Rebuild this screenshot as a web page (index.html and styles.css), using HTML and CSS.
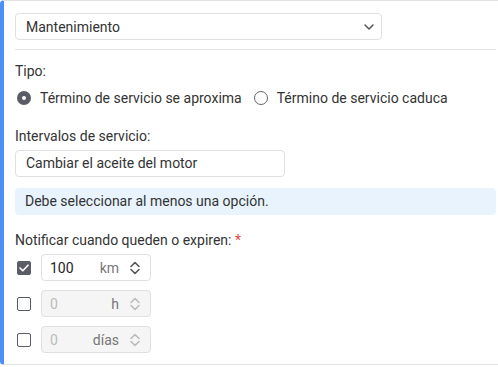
FILE: index.html
```html
<!DOCTYPE html>
<html>
<head>
  <title>Intervalo de servicio</title>
  <link rel="stylesheet" href="styles.css">
</head>
<body>

<div class="card">
  <div class="select">
    <span>Mantenimiento</span>
    <svg class="chevron" width="10" height="6" viewBox="0 0 10 6"><path d="M1 1l4 4 4-4" fill="none" stroke="#555" stroke-width="1.5" stroke-linecap="round" stroke-linejoin="round"/></svg>
  </div>

  <div class="divider"></div>

  <div class="label label-tipo">Tipo:</div>
  <div class="radios">
    <label class="radio checked"><span class="dot"></span>Término de servicio se aproxima</label>
    <label class="radio"><span class="dot"></span>Término de servicio caduca</label>
  </div>

  <div class="label label-interval">Intervalos de servicio:</div>
  <div class="input wide">Cambiar el aceite del motor</div>

  <div class="alert">Debe seleccionar al menos una opción.</div>

  <div class="label label-notify">Notificar cuando queden o expiren: <span class="req">*</span></div>

  <div class="rows">
    <div class="row">
      <span class="check checked">
        <svg width="10" height="8" viewBox="0 0 10 8"><path d="M1 4l2.8 2.8L9 1.2" fill="none" stroke="#fff" stroke-width="1.6" stroke-linecap="round" stroke-linejoin="round"/></svg>
      </span>
      <div class="number">
        <span class="value">100</span>
        <span class="unit">km</span>
        <svg class="spin" width="12" height="16" viewBox="0 0 12 16"><path d="M2 6.5l4-4 4 4M2 9.5l4 4 4-4" fill="none" stroke="#555" stroke-width="1.6" stroke-linecap="round" stroke-linejoin="round"/></svg>
      </div>
    </div>
    <div class="row">
      <span class="check"></span>
      <div class="number disabled">
        <span class="value">0</span>
        <span class="unit">h</span>
        <svg class="spin" width="12" height="16" viewBox="0 0 12 16"><path d="M2 6.5l4-4 4 4M2 9.5l4 4 4-4" fill="none" stroke="#bbb" stroke-width="1.6" stroke-linecap="round" stroke-linejoin="round"/></svg>
      </div>
    </div>
    <div class="row">
      <span class="check"></span>
      <div class="number disabled">
        <span class="value">0</span>
        <span class="unit">días</span>
        <svg class="spin" width="12" height="16" viewBox="0 0 12 16"><path d="M2 6.5l4-4 4 4M2 9.5l4 4 4-4" fill="none" stroke="#bbb" stroke-width="1.6" stroke-linecap="round" stroke-linejoin="round"/></svg>
      </div>
    </div>
  </div>
</div>

</body>
</html>
```

FILE: styles.css
```css
/* Service interval card */
body {
  margin: 0;
  font-family: Roboto, "Liberation Sans", sans-serif;
  font-size: 14px;
  color: #333;
  background: #fff;
}
.card {
  width: 481px;
  height: 340px;
  padding: 12px 11px 11px 11px;
  border: 1px solid #e2e2e2;
  border-left: 4px solid #4d90f5;
  border-radius: 4px;
}
.select {
  display: flex;
  align-items: center;
  justify-content: space-between;
  box-sizing: border-box;
  width: 367px;
  height: 27px;
  padding: 0 7px 0 10px;
  border: 1px solid #e0e0e0;
  border-radius: 4px;
}
.divider {
  height: 1px;
  background: #e4e4e4;
  margin-top: 9px;
}
.label {
  line-height: 20px;
}
.label-tipo {
  margin-top: 11px;
}
.radios {
  display: flex;
  margin-top: 7px;
  line-height: 20px;
}
.radio {
  display: flex;
  align-items: center;
  gap: 9px;
  margin-left: 2px;
  margin-right: 10px;
}
.radio .dot {
  box-sizing: border-box;
  width: 14px;
  height: 14px;
  border-radius: 50%;
  border: 1.5px solid #666;
  background: #fff;
}
.radio.checked .dot {
  border: 5px solid #5a5d66;
  background: #fff;
}
.label-interval {
  margin-top: 18px;
}
.input {
  box-sizing: border-box;
  height: 27px;
  line-height: 25px;
  padding: 0 10px;
  border: 1px solid #e0e0e0;
  border-radius: 4px;
  margin-top: 4px;
}
.input.wide {
  width: 270px;
}
.alert {
  margin-top: 11px;
  height: 27px;
  line-height: 27px;
  padding: 0 10px;
  background: #e8f3fd;
  border-radius: 4px;
}
.label-notify {
  margin-top: 15px;
}
.req {
  color: #e5484d;
}
.rows {
  display: flex;
  flex-direction: column;
  gap: 9px;
  margin-top: 4px;
}
.row {
  display: flex;
  align-items: center;
  gap: 10px;
}
.check {
  display: flex;
  align-items: center;
  justify-content: center;
  box-sizing: border-box;
  width: 14px;
  height: 14px;
  margin-left: 2px;
  border: 1.5px solid #5a5d66;
  border-radius: 2px;
  background: #fff;
}
.check.checked {
  background: #5a5d66;
}
.number {
  display: flex;
  align-items: center;
  box-sizing: border-box;
  width: 110px;
  height: 27px;
  padding: 0 9px 0 8px;
  border: 1px solid #e0e0e0;
  border-radius: 4px;
  background: #fff;
}
.number .value {
  flex: 1;
  color: #222;
}
.number .unit {
  color: #777;
  margin-right: 10px;
}
.number.disabled {
  background: #f5f5f5;
}
.number.disabled .value {
  color: #bbb;
}
```
